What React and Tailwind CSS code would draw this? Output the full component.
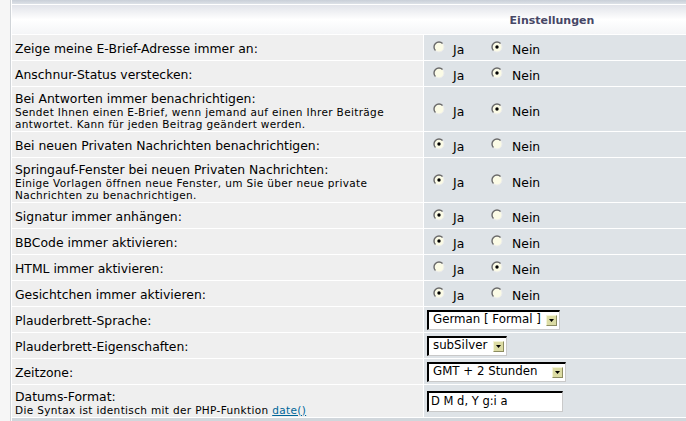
import React from "react";

const FONT = { fontFamily: '"DejaVu Sans", Verdana, sans-serif' };

function Radio({ checked }) {
  return (
    <svg width="12" height="12" viewBox="0 0 12 12" className="shrink-0 -translate-y-[1px]">
      <circle cx="6" cy="6" r="5" fill="#fbfbe6" stroke="#ececec" strokeWidth="1" />
      <path d="M2.46 9.54 A5 5 0 0 1 9.54 2.46" fill="none" stroke="#6a6a6a" strokeWidth="1.4" />
      {checked && <circle cx="6" cy="6" r="1.7" fill="#000" />}
    </svg>
  );
}

function YesNo({ yes }) {
  return (
    <div className="flex items-center pl-[9px] pt-[2px] text-[12.4px] text-black">
      <Radio checked={yes} />
      <span className="ml-[8px] w-[38px] translate-y-[2px]">Ja</span>
      <Radio checked={!yes} />
      <span className="ml-[9px] translate-y-[2px]">Nein</span>
    </div>
  );
}

function Arrow() {
  return (
    <span className="ml-auto mr-[2px] flex h-[11px] w-[11px] items-center justify-center border border-t-[#f4f4d8] border-l-[#f4f4d8] border-r-[#8c8c60] border-b-[#8c8c60] bg-[#dcdca4]">
      <svg width="5" height="3" viewBox="0 0 5 3">
        <path d="M0 0 H5 L2.5 3 Z" fill="#000" />
      </svg>
    </span>
  );
}

function Select({ label, width }) {
  return (
    <div
      className="ml-[3px] flex h-[20px] items-center border-t-2 border-l-2 border-b border-r border-t-black border-l-black border-b-[#c9c9c9] border-r-[#c9c9c9] bg-white pl-[4px] text-[11.8px] text-black"
      style={{ width }}
    >
      <span className="whitespace-nowrap">{label}</span>
      <Arrow />
    </div>
  );
}

function Label({ title, sub }) {
  return (
    <div className="pl-[3px] pt-[3px] text-black">
      <div className="text-[12.4px] leading-[14px]">{title}</div>
      {sub && <div className="text-[10.5px] leading-[12px] tracking-[0.35px]">{sub}</div>}
    </div>
  );
}

const rows = [
  { title: "Zeige meine E-Brief-Adresse immer an:", yes: false },
  { title: "Anschnur-Status verstecken:", yes: false },
  {
    title: "Bei Antworten immer benachrichtigen:",
    sub: (
      <>
        Sendet Ihnen einen E-Brief, wenn jemand auf einen Ihrer Beiträge
        <br />
        antwortet. Kann für jeden Beitrag geändert werden.
      </>
    ),
    yes: false,
    h: "h-[44px]",
  },
  { title: "Bei neuen Privaten Nachrichten benachrichtigen:", yes: true },
  {
    title: "Springauf-Fenster bei neuen Privaten Nachrichten:",
    sub: (
      <>
        Einige Vorlagen öffnen neue Fenster, um Sie über neue private
        <br />
        Nachrichten zu benachrichtigen.
      </>
    ),
    yes: true,
    h: "h-[44px]",
  },
  { title: "Signatur immer anhängen:", yes: true },
  { title: "BBCode immer aktivieren:", yes: true },
  { title: "HTML immer aktivieren:", yes: false },
  { title: "Gesichtchen immer aktivieren:", yes: true },
];

export default function App() {
  return (
    <div className="flex h-[421px] w-[686px] overflow-hidden bg-white" style={FONT}>
      <div className="w-[10px] shrink-0 bg-[#f6f6f6]" />
      <div className="w-px shrink-0 bg-[#d0d4d8]" />
      <div className="flex min-w-0 flex-1 flex-col bg-white pl-px">
        {/* top band */}
        <div className="h-[4px] shrink-0 bg-gradient-to-b from-[#c9cfd8] to-[#dde1e7]" />
        <div className="h-px shrink-0 bg-white" />
        {/* header row */}
        <div className="grid h-[29px] shrink-0 grid-cols-[412px_1fr] bg-gradient-to-b from-[#e2e4ea] via-white to-[#f4f5f7]">
          <div />
          <div className="flex items-center justify-center pr-[6px] pt-[3px] text-[11px] font-bold text-[#474766]">
            Einstellungen
          </div>
        </div>
        <div className="mt-px grid grid-cols-[411px_1fr] gap-px bg-white">
          {rows.map((r, i) => (
            <React.Fragment key={i}>
              <div className={`flex items-center bg-[#efefef] ${r.h || "h-[25px]"}`}>
                <Label title={r.title} sub={r.sub} />
              </div>
              <div className="flex items-center bg-[#dee3e7]">
                <YesNo yes={r.yes} />
              </div>
            </React.Fragment>
          ))}

          <div className="flex h-[25px] items-center bg-[#efefef]">
            <Label title="Plauderbrett-Sprache:" />
          </div>
          <div className="flex items-center bg-[#dee3e7]">
            <Select label="German [ Formal ]" width="133px" />
          </div>

          <div className="flex h-[25px] items-center bg-[#efefef]">
            <Label title="Plauderbrett-Eigenschaften:" />
          </div>
          <div className="flex items-center bg-[#dee3e7]">
            <Select label="subSilver" width="80px" />
          </div>

          <div className="flex h-[25px] items-center bg-[#efefef]">
            <Label title="Zeitzone:" />
          </div>
          <div className="flex items-center bg-[#dee3e7]">
            <Select label="GMT + 2 Stunden" width="139px" />
          </div>

          <div className="flex h-[32px] items-center bg-[#efefef]">
            <Label
              title="Datums-Format:"
              sub={
                <>
                  Die Syntax ist identisch mit der PHP-Funktion{" "}
                  <span className="text-[#006699] underline">date()</span>
                </>
              }
            />
          </div>
          <div className="flex items-center bg-[#dee3e7]">
            <div className="ml-[3px] flex h-[21px] w-[136px] items-center border-t-2 border-l-2 border-b border-r border-t-black border-l-black border-b-[#c9c9c9] border-r-[#c9c9c9] bg-white pl-[2px] text-[11.5px] text-black">
              D M d, Y g:i a
            </div>
          </div>
        </div>
        <div className="mt-px flex-1 bg-[#d1d7dc]" />
      </div>
    </div>
  );
}
